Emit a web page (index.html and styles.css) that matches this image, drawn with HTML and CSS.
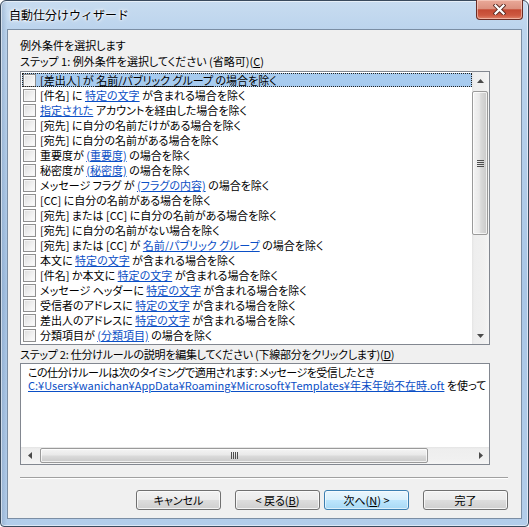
FILE: index.html
```html
<!DOCTYPE html>
<html lang="ja">
<head>
<meta charset="utf-8">
<title>自動仕分けウィザード</title>
<link rel="stylesheet" href="styles.css">
</head>
<body>
<div class="window">
  <div class="titlebar"><span class="title">自動仕分けウィザード</span></div>
  <div class="close-btn">
    <svg width="13" height="11" viewBox="0 0 13 11"><path d="M2.5 1.5 L10.5 9.5 M10.5 1.5 L2.5 9.5" stroke="#5a2a22" stroke-width="4" stroke-linecap="square"/><path d="M2.5 1.5 L10.5 9.5 M10.5 1.5 L2.5 9.5" stroke="#ffffff" stroke-width="2.2" stroke-linecap="square"/></svg>
  </div>
  <div class="client">
    <div class="label first">例外条件を選択します</div>
    <div class="label">ステップ 1: 例外条件を選択してください (省略可)(<u>C</u>)</div>
    <div class="listbox">
      <div class="items">
        <div class="row selected"><span class="cb"></span><span class="txt">[差出人] が <u>名前/パブリック グループ</u> の場合を除く</span></div>
        <div class="row"><span class="cb"></span><span class="txt">[件名] に <a>特定の文字</a> が含まれる場合を除く</span></div>
        <div class="row"><span class="cb"></span><span class="txt"><a>指定された</a> アカウントを経由した場合を除く</span></div>
        <div class="row"><span class="cb"></span><span class="txt">[宛先] に自分の名前だけがある場合を除く</span></div>
        <div class="row"><span class="cb"></span><span class="txt">[宛先] に自分の名前がある場合を除く</span></div>
        <div class="row"><span class="cb"></span><span class="txt">重要度が <a>(重要度)</a> の場合を除く</span></div>
        <div class="row"><span class="cb"></span><span class="txt">秘密度が <a>(秘密度)</a> の場合を除く</span></div>
        <div class="row"><span class="cb"></span><span class="txt">メッセージ フラグ が <a>(フラグの内容)</a> の場合を除く</span></div>
        <div class="row"><span class="cb"></span><span class="txt">[CC] に自分の名前がある場合を除く</span></div>
        <div class="row"><span class="cb"></span><span class="txt">[宛先] または [CC] に自分の名前がある場合を除く</span></div>
        <div class="row"><span class="cb"></span><span class="txt">[宛先] に自分の名前がない場合を除く</span></div>
        <div class="row"><span class="cb"></span><span class="txt">[宛先] または [CC] が <a>名前/パブリック グループ</a> の場合を除く</span></div>
        <div class="row"><span class="cb"></span><span class="txt">本文に <a>特定の文字</a> が含まれる場合を除く</span></div>
        <div class="row"><span class="cb"></span><span class="txt">[件名] か本文に <a>特定の文字</a> が含まれる場合を除く</span></div>
        <div class="row"><span class="cb"></span><span class="txt">メッセージ ヘッダーに <a>特定の文字</a> が含まれる場合を除く</span></div>
        <div class="row"><span class="cb"></span><span class="txt">受信者のアドレスに <a>特定の文字</a> が含まれる場合を除く</span></div>
        <div class="row"><span class="cb"></span><span class="txt">差出人のアドレスに <a>特定の文字</a> が含まれる場合を除く</span></div>
        <div class="row"><span class="cb"></span><span class="txt">分類項目が <a>(分類項目)</a> の場合を除く</span></div>
      </div>
      <div class="vscroll">
        <div class="sb-btn"><svg width="7" height="4" viewBox="0 0 7 4"><path d="M3.5 0 L7 4 L0 4 Z" fill="#4a4a4a"/></svg></div>
        <div class="vtrack">
          <div class="vthumb">
            <svg width="7" height="7" viewBox="0 0 7 7"><path d="M0 0.5 H7 M0 2.5 H7 M0 4.5 H7 M0 6.5 H7" stroke="#4d4d4d" stroke-width="1"/></svg>
          </div>
        </div>
        <div class="sb-btn"><svg width="7" height="4" viewBox="0 0 7 4"><path d="M0 0 L7 0 L3.5 4 Z" fill="#4a4a4a"/></svg></div>
      </div>
    </div>
    <div class="label step2">ステップ 2: 仕分けルールの説明を編集してください (下線部分をクリックします)(<u>D</u>)</div>
    <div class="desc">
      <div class="desc-text">
        <div class="line first-line">この仕分けルールは次のタイミングで適用されます: メッセージを受信したとき</div>
        <div class="line"><a>C:¥Users¥wanichan¥AppData¥Roaming¥Microsoft¥Templates¥年末年始不在時.oft</a> を使って</div>
      </div>
      <div class="hscroll">
        <div class="sb-btn"><svg width="4" height="7" viewBox="0 0 4 7"><path d="M4 0 L4 7 L0 3.5 Z" fill="#4a4a4a"/></svg></div>
        <div class="htrack">
          <div class="hthumb">
            <svg width="7" height="7" viewBox="0 0 7 7"><path d="M0.5 0 V7 M2.5 0 V7 M4.5 0 V7 M6.5 0 V7" stroke="#4d4d4d" stroke-width="1"/></svg>
          </div>
        </div>
        <div class="sb-btn"><svg width="4" height="7" viewBox="0 0 4 7"><path d="M0 0 L4 3.5 L0 7 Z" fill="#4a4a4a"/></svg></div>
      </div>
    </div>
    <div class="separator"></div>
    <div class="buttons">
      <button class="btn">キャンセル</button>
      <button class="btn back">&lt; 戻る(<u>B</u>)</button>
      <button class="btn default">次へ(<u>N</u>) &gt;</button>
      <button class="btn finish">完了</button>
    </div>
  </div>
</div>
</body>
</html>
```

FILE: styles.css
```css
* { box-sizing: border-box; }
html, body { margin: 0; padding: 0; }
body {
  width: 529px;
  height: 527px;
  overflow: hidden;
  background: #ffffff;
  font-family: "Noto Sans CJK JP", "Noto Sans", sans-serif;
  font-size: 11px;
  color: #000;
  font-feature-settings: "palt";
}

.window {
  position: relative;
  width: 529px;
  height: 527px;
  border: 1px solid #3a4a5d;
  border-radius: 6px 6px 4px 4px;
  background:
    linear-gradient(to right, rgba(70,100,140,0.25) 0px, rgba(70,100,140,0.0) 6px, rgba(0,0,0,0) 100%),
    linear-gradient(to bottom, #c8dcf0 0px, #bcd4ed 28px, #a9c6e6 55%, #b3cdea 100%);
  box-shadow: inset 0 0 0 1px rgba(255,255,255,0.55);
  display: flex;
  flex-direction: column;
}

.titlebar {
  height: 28px;
  padding-left: 8px;
  display: flex;
  align-items: center;
}
.title {
  font-size: 12px;
  line-height: 16px;
  font-feature-settings: normal;
  text-shadow: 0 0 5px #ffffff, 0 0 3px #ffffff, 0 0 2px #ffffff;
}

.close-btn {
  position: absolute;
  top: -1px;
  right: 5px;
  width: 47px;
  height: 20px;
  border: 1px solid #6a2c24;
  border-top: none;
  border-radius: 0 0 4px 4px;
  background: linear-gradient(to bottom, #e9a999 0%, #dc917f 45%, #c44a33 52%, #cd5840 80%, #e0836a 100%);
  box-shadow: inset 0 0 0 1px rgba(255,220,210,0.55);
  display: flex;
  align-items: center;
  justify-content: center;
  padding-bottom: 1px;
}

.client {
  flex: 1;
  margin: 0 6px 7px 6px;
  border: 1px solid #7b8ea4;
  background: #f0f0f0;
  display: flex;
  flex-direction: column;
  padding: 7px 0 0 12px;
}

.label {
  height: 16px;
  line-height: 16px;
  white-space: nowrap;
}
.label.step2 { margin-top: 1px; letter-spacing: -0.25px; }

.listbox {
  margin-top: 2px;
  width: 470px;
  height: 274px;
  border: 1px solid #828790;
  background: #ffffff;
  display: flex;
}
.items {
  flex: 1;
  overflow: hidden;
}
.row {
  position: relative;
  height: 15px;
  display: flex;
  align-items: flex-start;
  padding-left: 2px;
  white-space: nowrap;
}
.row.selected {
  background: linear-gradient(#a7cbef, #a7cbef) 1px 1px / calc(100% - 1px) 14px no-repeat;
}
.row.selected::after {
  content: "";
  position: absolute;
  left: 1px;
  top: 1px;
  right: 0;
  bottom: 0;
  border: 1px dotted #202020;
}
.cb {
  flex: none;
  width: 13px;
  height: 13px;
  margin-top: 2px;
  margin-right: 4px;
  border: 1px solid #8f8f8f;
  background: linear-gradient(135deg, #dcdcdc 0%, #f0f0f0 55%, #fdfdfd 100%);
  box-shadow: inset 0 0 0 1px #f6f6f6;
}
.txt {
  line-height: 16px;
  height: 15px;
}
a {
  color: #0b4fc6;
  text-decoration: underline;
}
u { text-decoration: underline; }

.vscroll {
  flex: none;
  width: 17px;
  display: flex;
  flex-direction: column;
  background: linear-gradient(to right, #e4e4e4 0px, #eeeeee 2px, #f0f0f0 12px, #f5f5f5 100%);
}
.sb-btn {
  flex: none;
  width: 17px;
  height: 17px;
  display: flex;
  align-items: center;
  justify-content: center;
}
.vtrack {
  flex: 1;
  padding: 2px 1px 0 0;
}
.vthumb {
  height: 144px;
  border: 1px solid #9a9a9a;
  border-radius: 2px;
  background: linear-gradient(to right, #f4f4f4 0%, #e9e9e9 45%, #dadada 55%, #c9c9c9 100%);
  box-shadow: inset 0 0 0 1px rgba(255,255,255,0.7);
  display: flex;
  align-items: center;
  justify-content: center;
}

.desc {
  margin-top: 1px;
  width: 470px;
  height: 102px;
  border: 1px solid #828790;
  background: #ffffff;
  display: flex;
  flex-direction: column;
}
.desc-text {
  flex: 1;
  overflow: hidden;
  padding: 2px 0 0 7px;
  white-space: nowrap;
}
.line {
  height: 13px;
  line-height: 13px;
}
.line.first-line { letter-spacing: -0.5px; }
.hscroll {
  flex: none;
  height: 17px;
  display: flex;
  background: linear-gradient(to bottom, #e4e4e4 0px, #eeeeee 2px, #f0f0f0 12px, #f5f5f5 100%);
}
.htrack {
  flex: 1;
  padding: 1px 0 1px 2px;
}
.hthumb {
  width: 388px;
  height: 15px;
  border: 1px solid #9a9a9a;
  border-radius: 2px;
  background: linear-gradient(to bottom, #f4f4f4 0%, #e9e9e9 45%, #dadada 55%, #c9c9c9 100%);
  box-shadow: inset 0 0 0 1px rgba(255,255,255,0.7);
  display: flex;
  align-items: center;
  justify-content: center;
}

.separator {
  margin-top: 12px;
  width: 488px;
  height: 2px;
  border-top: 1px solid #a0a0a0;
  border-bottom: 1px solid #ffffff;
}

.buttons {
  margin-top: 11px;
  display: flex;
  justify-content: flex-end;
  padding-right: 13px;
  gap: 14px;
}
.btn {
  width: 85px;
  height: 20px;
  padding: 0;
  border: 1px solid #707070;
  border-radius: 3px;
  background: linear-gradient(to bottom, #f2f2f2 0%, #ebebeb 49%, #dddddd 50%, #cfcfcf 100%);
  box-shadow: inset 0 0 0 1px rgba(252,252,252,0.8);
  font-family: "Noto Sans CJK JP", "Noto Sans", sans-serif;
  font-size: 11px;
  line-height: 16px;
  color: #000;
  font-feature-settings: "palt";
}
.btn.back { margin-right: -10px; }
.btn.default {
  border-color: #3c7fb1;
  background: linear-gradient(to bottom, #eaf6fd 0%, #d9f0fc 49%, #bee6fd 50%, #a7d9f5 100%);
  box-shadow: inset 0 0 0 1px rgba(255,255,255,0.6);
}
```
